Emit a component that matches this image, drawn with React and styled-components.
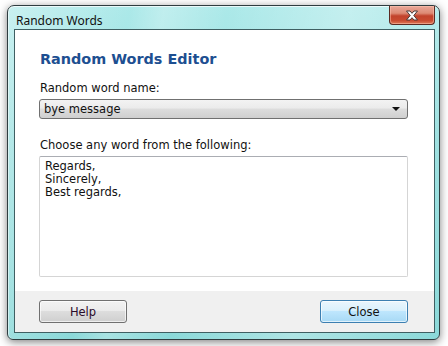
import React, { useState } from 'react';
import styled, { createGlobalStyle } from 'styled-components';

const GlobalStyle = createGlobalStyle`
  html, body {
    margin: 0;
    padding: 0;
    background: #ffffff;
  }
  body {
    font-family: "DejaVu Sans", Verdana, sans-serif;
  }
`;

const Page = styled.div`
  width: 448px;
  height: 346px;
  box-sizing: border-box;
  padding: 5px 8px 6px 7px;
  background: #ffffff;
`;

const Window = styled.div`
  box-sizing: border-box;
  height: 335px;
  display: flex;
  flex-direction: column;
  border: 1px solid #2f3d40;
  border-radius: 7px 7px 6px 6px;
  padding: 0 4px 6px 6px;
  background:
    linear-gradient(100deg, rgba(255,255,255,0.35) 0%, rgba(255,255,255,0) 25%, rgba(255,255,255,0.25) 32%, rgba(255,255,255,0) 45%, rgba(255,255,255,0.3) 70%, rgba(255,255,255,0) 100%),
    linear-gradient(180deg, #ace9e9 0%, #98dfdf 40%, #8bd9d9 100%);
  box-shadow: 0 2px 8px rgba(0, 0, 0, 0.5), inset 0 1px 0 rgba(255,255,255,0.7), inset 1px 0 0 rgba(255,255,255,0.5);
`;

const TitleBar = styled.div`
  height: 27px;
  display: flex;
  align-items: flex-start;
  justify-content: space-between;
`;

const Title = styled.span`
  font-family: "Noto Sans", "Open Sans", sans-serif;
  font-size: 12px;
  color: #111;
  padding: 7px 0 0 2px;
  line-height: 15px;
`;

const CloseBox = styled.button`
  width: 46px;
  height: 19px;
  padding: 0;
  border: 1px solid #5a2a22;
  border-top: none;
  border-radius: 0 0 4px 4px;
  background: linear-gradient(180deg, #e9a89a 0%, #dd8a74 40%, #c2432c 55%, #c84a30 80%, #de7a58 100%);
  box-shadow: inset 0 0 0 1px rgba(255, 200, 180, 0.5);
  display: flex;
  align-items: center;
  justify-content: center;
  cursor: pointer;
`;

const Client = styled.div`
  flex: 1;
  display: flex;
  flex-direction: column;
  border: 1px solid #3f5f62;
  background: #ffffff;
`;

const Body = styled.div`
  flex: 1;
  padding: 20px 26px 14px 24px;
  display: flex;
  flex-direction: column;
`;

const Heading = styled.h1`
  margin: 0 0 13px 1px;
  font-family: "DejaVu Sans", Verdana, sans-serif;
  font-size: 14.4px;
  font-weight: bold;
  line-height: 19px;
  color: #1d4f91;
`;

const Label = styled.label`
  display: block;
  font-size: 11.5px;
  line-height: 13px;
  color: #111;
  margin: 0 0 4px 1px;
`;

const SelectBox = styled.div`
  height: 20px;
  box-sizing: border-box;
  border: 1px solid #707070;
  border-radius: 3px;
  background: linear-gradient(180deg, #f3f3f3 0%, #ebebeb 45%, #dddddd 50%, #cfcfcf 100%);
  display: flex;
  align-items: center;
  padding: 0 7px 0 4px;
  margin-bottom: 20px;
  font-size: 11.5px;
  color: #111;
`;

const SelectText = styled.span`
  flex: 1;
`;

const Arrow = styled.span`
  width: 0;
  height: 0;
  border-left: 4px solid transparent;
  border-right: 4px solid transparent;
  border-top: 4px solid #111;
`;

const WordArea = styled.textarea`
  height: 121px;
  box-sizing: border-box;
  resize: none;
  border: 1px solid #d5d5d5;
  border-top-color: #abadb3;
  border-radius: 2px;
  padding: 3px 5px;
  font-family: "DejaVu Sans", Verdana, sans-serif;
  font-size: 11.5px;
  line-height: 13px;
  color: #111;
  outline: none;
`;

const Footer = styled.div`
  height: 41px;
  box-sizing: border-box;
  background: #f0f0f0;
  display: flex;
  align-items: flex-start;
  justify-content: space-between;
  padding: 9px 26px 0 24px;
`;

const Button = styled.button`
  width: 88px;
  height: 23px;
  box-sizing: border-box;
  border-radius: 3px;
  font-family: "DejaVu Sans", Verdana, sans-serif;
  font-size: 11.5px;
  color: ${(p) => (p.$primary ? '#111' : '#2a0a2a')};
  border: 1px solid ${(p) => (p.$primary ? '#3c7fb1' : '#707070')};
  background: ${(p) => (p.$primary
    ? 'linear-gradient(180deg, #eaf6fd 0%, #d9f0fc 45%, #bee6fd 50%, #a7d9f5 100%)'
    : 'linear-gradient(180deg, #f2f2f2 0%, #ebebeb 45%, #dddddd 50%, #cfcfcf 100%)')};
  box-shadow: inset 0 0 0 1px rgba(255, 255, 255, 0.65);
  cursor: pointer;
`;

export default function App() {
  const [words, setWords] = useState('Regards,\nSincerely,\nBest regards,');

  return (
    <>
      <GlobalStyle />
      <Page>
        <Window>
          <TitleBar>
            <Title>Random Words</Title>
            <CloseBox aria-label="Close">
              <svg width="14" height="11" viewBox="0 0 14 11">
                <path
                  d="M1.5 1 H5 L7 3.3 L9 1 H12.5 L8.8 5.5 L12.5 10 H9 L7 7.7 L5 10 H1.5 L5.2 5.5 Z"
                  fill="#ffffff"
                  stroke="#4a3a38"
                  strokeWidth="1"
                  strokeLinejoin="round"
                />
              </svg>
            </CloseBox>
          </TitleBar>
          <Client>
            <Body>
              <Heading>Random Words Editor</Heading>
              <Label>Random word name:</Label>
              <SelectBox>
                <SelectText>bye message</SelectText>
                <Arrow />
              </SelectBox>
              <Label>Choose any word from the following:</Label>
              <WordArea value={words} onChange={(e) => setWords(e.target.value)} />
            </Body>
            <Footer>
              <Button type="button">Help</Button>
              <Button type="button" $primary>Close</Button>
            </Footer>
          </Client>
        </Window>
      </Page>
    </>
  );
}
